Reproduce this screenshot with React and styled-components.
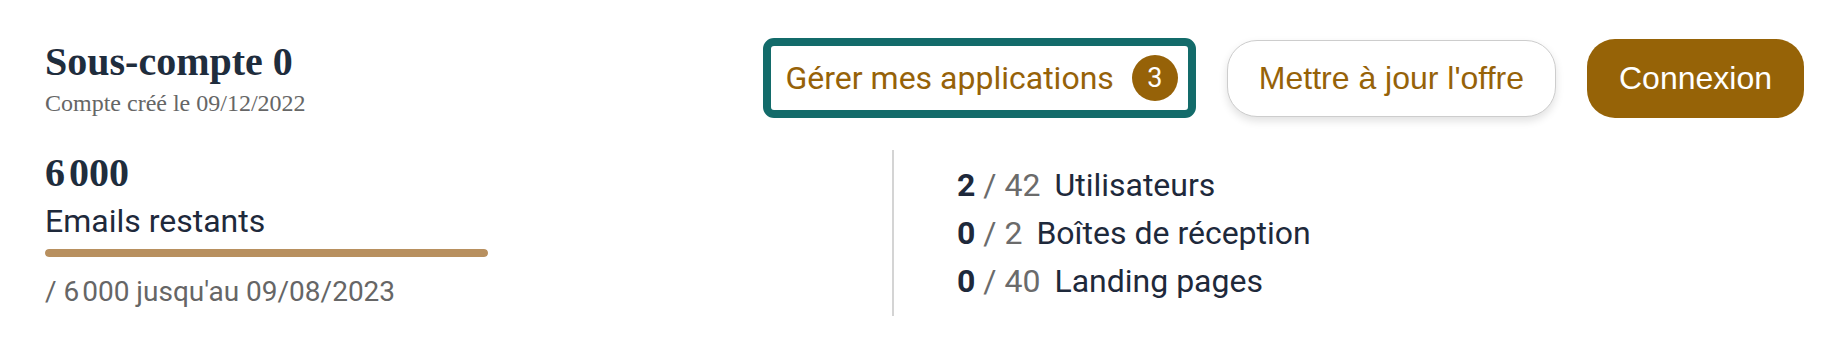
import React from "react";
import styled, { createGlobalStyle } from "styled-components";

const GlobalStyle = createGlobalStyle`
    body {
        margin: 0;
        background: #ffffff;
        font-family: Roboto, "Liberation Sans", sans-serif;
    }
`;

const Page = styled.div`
    padding: 38px 30px 0 45px;
`;

const Header = styled.div`
    display: flex;
    justify-content: space-between;
    align-items: center;
`;

const TitleBlock = styled.div`
    display: flex;
    flex-direction: column;
    gap: 4px;
`;

const Title = styled.h1`
    margin: 0;
    font-family: "Liberation Serif", serif;
    font-size: 40px;
    line-height: 46px;
    font-weight: bold;
    color: #1f2d3d;
`;

const Created = styled.p`
    margin: 0;
    font-family: "Liberation Serif", serif;
    font-size: 24px;
    line-height: 28px;
    color: #666666;
`;

const Actions = styled.div`
    display: flex;
    align-items: center;
    gap: 31px;
`;

const AppsButton = styled.button`
    display: flex;
    align-items: center;
    gap: 18px;
    padding: 9px 10px 9px 15px;
    border: 8px solid #136b6a;
    border-radius: 11px;
    background: #ffffff;
    font-family: Roboto, sans-serif;
    font-size: 32px;
    color: #966208;
    cursor: pointer;
`;

const Badge = styled.span`
    display: flex;
    align-items: center;
    justify-content: center;
    width: 46px;
    height: 46px;
    border-radius: 50%;
    background: #966208;
    color: #ffffff;
    font-family: Roboto, sans-serif;
    font-size: 27px;
`;

const PillButton = styled.button`
    height: ${(props) => props.$height}px;
    padding: 0 ${(props) => props.$padX}px;
    border-radius: ${(props) => props.$radius}px;
    font-family: "Liberation Sans", Arial, sans-serif;
    font-size: 32px;
    cursor: pointer;
`;

const OutlineButton = styled(PillButton)`
    border: 1px solid #cdcdcd;
    background: #ffffff;
    color: #966208;
    box-shadow: 0 4px 8px rgba(0, 0, 0, 0.12);
`;

const PrimaryButton = styled(PillButton)`
    border: none;
    background: #966307;
    color: #ffffff;
`;

const Body = styled.div`
    display: flex;
    margin-top: 32px;
`;

const Usage = styled.div`
    width: 847px;
    display: flex;
    flex-direction: column;
    padding-bottom: 7px;
`;

const Remaining = styled.div`
    font-family: "Liberation Serif", serif;
    font-size: 40px;
    line-height: 46px;
    font-weight: bold;
    color: #1f2d3d;
    word-spacing: -6px;
`;

const UsageLabel = styled.div`
    margin-top: 5px;
    font-size: 32px;
    line-height: 40px;
    color: #1e293b;
`;

const Track = styled.div`
    width: 443px;
    height: 8px;
    margin-top: 8px;
    border-radius: 4px;
    background: #ece3d8;
    overflow: hidden;
`;

const Fill = styled.div`
    height: 100%;
    border-radius: 4px;
    background: #b8905f;
`;

const Note = styled.div`
    margin-top: 18px;
    font-size: 28px;
    line-height: 34px;
    color: #666666;
`;

const Grouped = styled.span`
    word-spacing: -4px;
`;

const Limits = styled.div`
    display: flex;
    flex-direction: column;
    justify-content: center;
    padding: 11px 0 11px 63px;
    border-left: 2px solid #d4d4d4;
`;

const LimitRow = styled.div`
    font-size: 32px;
    line-height: 48px;
    color: #1e293b;
    white-space: nowrap;
`;

const Used = styled.span`
    font-weight: bold;
`;

const Total = styled.span`
    color: #6b6b6b;
`;

const LimitLabel = styled.span`
    margin-left: 14px;
`;

const limits = [
    { used: 2, total: 42, label: "Utilisateurs" },
    { used: 0, total: 2, label: "Boîtes de réception" },
    { used: 0, total: 40, label: "Landing pages" },
];

const remaining = 6000;
const quota = 6000;

export default function App() {
    return (
        <>
            <GlobalStyle />
            <Page>
                <Header>
                    <TitleBlock>
                        <Title>Sous-compte 0</Title>
                        <Created>Compte créé le 09/12/2022</Created>
                    </TitleBlock>
                    <Actions>
                        <AppsButton>
                            Gérer mes applications
                            <Badge>3</Badge>
                        </AppsButton>
                        <OutlineButton $height={77} $padX={31} $radius={30}>
                            Mettre à jour l'offre
                        </OutlineButton>
                        <PrimaryButton $height={79} $padX={32} $radius={28}>
                            Connexion
                        </PrimaryButton>
                    </Actions>
                </Header>
                <Body>
                    <Usage>
                        <Remaining>6 000</Remaining>
                        <UsageLabel>Emails restants</UsageLabel>
                        <Track>
                            <Fill style={{ width: `${(remaining / quota) * 100}%` }} />
                        </Track>
                        <Note>
                            / <Grouped>6 000</Grouped> jusqu'au 09/08/2023
                        </Note>
                    </Usage>
                    <Limits>
                        {limits.map((l) => (
                            <LimitRow key={l.label}>
                                <Used>{l.used}</Used>
                                <Total> / {l.total}</Total>
                                <LimitLabel>{l.label}</LimitLabel>
                            </LimitRow>
                        ))}
                    </Limits>
                </Body>
            </Page>
        </>
    );
}
